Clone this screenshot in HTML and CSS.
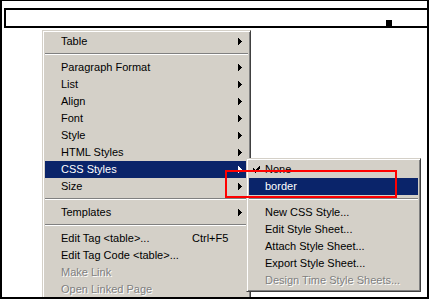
FILE: index.html
```html
<!DOCTYPE html>
<html lang="en">
<head>
    <meta charset="UTF-8">
    <title>Context Menu</title>
    <link rel="stylesheet" href="styles.css">
</head>
<body>
    <!-- Tabela selecionada no documento -->
    <div class="table-box">
        <span class="handle"></span>
    </div>

    <!-- Menu de contexto principal -->
    <div class="menu main-menu">
        <div class="item"><span class="label">Table</span><svg class="arrow" width="4" height="7"><path d="M0 0h1v7h-1zM1 1h1v5h-1zM2 2h1v3h-1zM3 3h1v1h-1z"/></svg></div>
        <div class="sep"></div>
        <div class="item"><span class="label">Paragraph Format</span><svg class="arrow" width="4" height="7"><path d="M0 0h1v7h-1zM1 1h1v5h-1zM2 2h1v3h-1zM3 3h1v1h-1z"/></svg></div>
        <div class="item"><span class="label">List</span><svg class="arrow" width="4" height="7"><path d="M0 0h1v7h-1zM1 1h1v5h-1zM2 2h1v3h-1zM3 3h1v1h-1z"/></svg></div>
        <div class="item"><span class="label">Align</span><svg class="arrow" width="4" height="7"><path d="M0 0h1v7h-1zM1 1h1v5h-1zM2 2h1v3h-1zM3 3h1v1h-1z"/></svg></div>
        <div class="item"><span class="label">Font</span><svg class="arrow" width="4" height="7"><path d="M0 0h1v7h-1zM1 1h1v5h-1zM2 2h1v3h-1zM3 3h1v1h-1z"/></svg></div>
        <div class="item"><span class="label">Style</span><svg class="arrow" width="4" height="7"><path d="M0 0h1v7h-1zM1 1h1v5h-1zM2 2h1v3h-1zM3 3h1v1h-1z"/></svg></div>
        <div class="item"><span class="label">HTML Styles</span><svg class="arrow" width="4" height="7"><path d="M0 0h1v7h-1zM1 1h1v5h-1zM2 2h1v3h-1zM3 3h1v1h-1z"/></svg></div>
        <div class="item active"><span class="label">CSS Styles</span><svg class="arrow" width="4" height="7"><path d="M0 0h1v7h-1zM1 1h1v5h-1zM2 2h1v3h-1zM3 3h1v1h-1z"/></svg></div>
        <div class="item"><span class="label">Size</span><svg class="arrow" width="4" height="7"><path d="M0 0h1v7h-1zM1 1h1v5h-1zM2 2h1v3h-1zM3 3h1v1h-1z"/></svg></div>
        <div class="sep"></div>
        <div class="item"><span class="label">Templates</span><svg class="arrow" width="4" height="7"><path d="M0 0h1v7h-1zM1 1h1v5h-1zM2 2h1v3h-1zM3 3h1v1h-1z"/></svg></div>
        <div class="sep"></div>
        <div class="item"><span class="label short">Edit Tag &lt;table&gt;...</span><span class="shortcut">Ctrl+F5</span></div>
        <div class="item"><span class="label">Edit Tag Code &lt;table&gt;...</span></div>
        <div class="item disabled"><span class="label">Make Link</span></div>
        <div class="item disabled"><span class="label">Open Linked Page</span></div>
    </div>

    <!-- Submenu CSS Styles -->
    <div class="menu sub-menu">
        <div class="item"><svg class="check" width="7" height="7"><path d="M6 0h1v1h-1zM5 1h2v1h-2zM0 2h1v1h-1zM4 2h3v1h-3zM0 3h2v1h-2zM3 3h3v1h-3zM0 4h5v1h-5zM1 5h3v1h-3zM2 6h1v1h-1z"/></svg><span class="label">None</span></div>
        <div class="item active"><span class="label">border</span></div>
        <div class="sep"></div>
        <div class="item"><span class="label">New CSS Style...</span></div>
        <div class="item"><span class="label">Edit Style Sheet...</span></div>
        <div class="item"><span class="label">Attach Style Sheet...</span></div>
        <div class="item"><span class="label">Export Style Sheet...</span></div>
        <div class="item disabled"><span class="label">Design Time Style Sheets...</span></div>
    </div>

    <!-- Marcação vermelha -->
    <div class="highlight-box"></div>
</body>
</html>
```

FILE: styles.css
```css
* {
    margin: 0;
    padding: 0;
    box-sizing: border-box;
}

body {
    width: 429px;
    height: 299px;
    background-color: #ffffff;
    border: 2px solid #000000;
    border-top-width: 1px;
    position: relative;
    overflow: hidden;
    font-family: 'Liberation Sans', Arial, sans-serif;
    font-size: 11px;
    color: #000000;
}

/* Tabela */
.table-box {
    display: flex;
    justify-content: flex-end;
    align-items: flex-end;
    height: 20px;
    margin: 7px 0 0 2px;
    padding-right: 35px;
    border: 2px solid #000000;
    border-right: none;
}

.handle {
    width: 6px;
    height: 6px;
    background-color: #000000;
}

/* Menus */
.menu {
    position: absolute;
    display: flex;
    flex-direction: column;
    background-color: #d4d0c8;
    border: 1px solid;
    border-color: #d4d0c8 #404040 #404040 #d4d0c8;
    box-shadow: inset 1px 1px #ffffff, inset -1px -1px #808080;
    padding: 2px;
    z-index: 10;
}

.main-menu {
    left: 40px;
    top: 29px;
    width: 209px;
}

.sub-menu {
    left: 244px;
    top: 157px;
    width: 175px;
    z-index: 11;
}

.item {
    display: flex;
    align-items: center;
    height: 17px;
    line-height: 17px;
    padding-left: 16px;
    position: relative;
    white-space: nowrap;
}

.item .label {
    flex: 1;
}

.item .label.short {
    flex: 0 0 131px;
}

.shortcut {
    flex: 1;
}

.arrow {
    fill: #000000;
    margin-right: 6px;
    shape-rendering: crispEdges;
}

.check {
    position: absolute;
    left: 4px;
    top: 5px;
    fill: #000000;
    shape-rendering: crispEdges;
}

.item.active {
    background-color: #0a246a;
    color: #ffffff;
}

.item.active .arrow {
    fill: #ffffff;
}

.item.disabled {
    color: #808080;
    text-shadow: 1px 1px 0 #ffffff;
}

.sep {
    height: 9px;
    padding-top: 3px;
}

.sep::before {
    content: '';
    display: block;
    border-top: 1px solid #808080;
    border-bottom: 1px solid #ffffff;
}

/* Marcação vermelha */
.highlight-box {
    position: absolute;
    left: 223px;
    top: 169px;
    width: 172px;
    height: 28px;
    border: 2px solid #ff0000;
    z-index: 20;
}
```
